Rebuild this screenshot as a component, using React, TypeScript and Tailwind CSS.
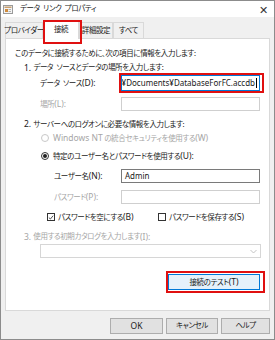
import type { ReactNode } from "react";

const FONT = "font-['Noto_Sans','Noto_Sans_CJK_JP',sans-serif] [font-feature-settings:'palt'] tracking-[-0.4px]";

// latin runs sit a little larger than the kana around them
function L({ children }: { children: ReactNode }) {
  return <span className="text-[8.5px] tracking-normal">{children}</span>;
}

function Radio({ checked, disabled }: { checked?: boolean; disabled?: boolean }) {
  return (
    <span
      className={`flex h-[8px] w-[8px] shrink-0 items-center justify-center rounded-full border ${
        disabled ? "border-[#c8c8c8] bg-white" : "border-[#333] bg-white"
      }`}
    >
      {checked && <span className="h-[4px] w-[4px] rounded-full bg-[#222]" />}
    </span>
  );
}

function Check({ checked }: { checked?: boolean }) {
  return (
    <span className="flex h-[8px] w-[8px] shrink-0 items-center justify-center border border-[#333] bg-white">
      {checked && (
        <svg width="7" height="7" viewBox="0 0 7 7">
          <path d="M1 3.6 L2.8 5.3 L6 1.4" fill="none" stroke="#222" strokeWidth="0.9" />
        </svg>
      )}
    </span>
  );
}

function Field({ label, disabled, indent, children }: { label: ReactNode; disabled?: boolean; indent: string; children?: ReactNode }) {
  return (
    <div className="flex h-[14px] items-center">
      <span className={`${indent} ${disabled ? "text-[#a6a6a6]" : "text-[#1a1a1a]"}`}>{label}</span>
      <div
        className={`ml-auto mr-[9px] flex h-full w-[139px] items-center border px-[3px] ${
          disabled ? "border-[#cfcfcf]" : "border-[#7a7a7a]"
        } bg-white`}
      >
        {children}
      </div>
    </div>
  );
}

function Tab({ label, w, active }: { label: string; w: string; active?: boolean }) {
  return active ? (
    <div className={`relative -mb-px flex h-[19px] ${w} items-center justify-center border border-b-0 border-[#d9d9d9] bg-white`}>
      {label}
      <span className="absolute -top-[1px] -left-[1px] -right-[4px] -bottom-[5px] border-2 border-[#e01010]" />
    </div>
  ) : (
    <div className={`mt-[2px] flex h-[16px] ${w} items-center justify-center border border-b-0 border-[#d9d9d9] bg-[#f0f0f0]`}>
      {label}
    </div>
  );
}

export default function App() {
  return (
    <div className={`${FONT} h-[340px] w-[275px] overflow-hidden whitespace-nowrap border border-[#8c8c8c] bg-[#f0f0f0] text-[7.5px] leading-none text-[#1a1a1a]`}>
      {/* title bar */}
      <div className="flex h-[16px] items-center bg-white">
        <svg className="ml-[2px]" width="11" height="11" viewBox="0 0 11 11">
          <rect x="0.5" y="1.5" width="9" height="8" fill="#f4f4f4" stroke="#9a9a9a" />
          <rect x="1.5" y="2.5" width="7" height="1.5" fill="#c8a070" />
          <rect x="2" y="5" width="3" height="3" fill="#d08a3a" />
          <rect x="5.5" y="5" width="2.5" height="1" fill="#b0b0b0" />
          <rect x="5.5" y="7" width="2.5" height="1" fill="#b0b0b0" />
        </svg>
        <span className="ml-[6px] text-[#222]">データ&ensp;リンク&ensp;プロパティ</span>
        <span className="ml-auto mr-[6px] text-[11px] font-light text-[#333]">✕</span>
      </div>

      {/* tabs */}
      <div className="mt-[2px] flex h-[19px] items-end pl-[4px]">
        <Tab label="プロバイダー" w="w-[38px]" />
        <Tab label="接続" w="w-[36px]" active />
        <Tab label="詳細設定" w="w-[34px]" />
        <Tab label="すべて" w="w-[31px]" />
      </div>

      {/* panel */}
      <div className="ml-[4px] flex h-[273px] w-[265px] flex-col border border-[#d9d9d9] bg-white">
        <div className="mt-[8px] flex h-[14px] items-center pl-[9px]">このデータに接続するために、次の項目に情報を入力します:</div>
        <div className="flex h-[14px] items-center pl-[18px]">
          <L>1.&nbsp;</L>データ&ensp;ソースとデータの場所を入力します:
        </div>

        <div className="flex h-[16px] items-center">
          <span className="ml-[34px]">
            データ&ensp;ソース<L>(D):</L>
          </span>
          <div className="relative ml-auto mr-[9px] h-full w-[139px]">
            <div className="flex h-full items-center justify-end overflow-hidden border border-[#0078d7] bg-white pr-[2px] text-[8px] tracking-normal">
              <span className="shrink-0">¥Documents¥DatabaseForFC.accdb</span>
              <span className="ml-px h-[10px] w-px shrink-0 bg-black" />
            </div>
            <span className="absolute -top-[2px] -left-[2px] -right-[4px] -bottom-[2px] border-2 border-[#e01010]" />
          </div>
        </div>

        <div className="mt-[6px]">
          <Field label={<>場所<L>(L):</L></>} disabled indent="ml-[34px]" />
        </div>

        <div className="mt-[7px] flex h-[13px] items-center pl-[18px]">
          <L>2.&nbsp;</L>サーバーへのログオンに必要な情報を入力します:
        </div>
        <div className="flex h-[14px] items-center gap-[4px] pl-[35px] text-[#a6a6a6]">
          <Radio disabled />
          <span>
            <L>Windows NT</L> の統合セキュリティを使用する<L>(W)</L>
          </span>
        </div>
        <div className="mt-[4px] flex h-[14px] items-center gap-[4px] pl-[35px]">
          <Radio checked />
          <span>
            特定のユーザー名とパスワードを使用する<L>(U):</L>
          </span>
        </div>

        <div className="mt-[6px]">
          <Field label={<>ユーザー名<L>(N):</L></>} indent="ml-[48px]">
            <span className="text-[8px] tracking-normal">Admin</span>
          </Field>
        </div>
        <div className="mt-[7px]">
          <Field label={<>パスワード<L>(P):</L></>} disabled indent="ml-[48px]" />
        </div>

        <div className="mt-[6px] flex h-[14px] items-center">
          <div className="ml-[41px] flex w-[111px] items-center gap-[3px]">
            <Check checked />
            <span>
              パスワードを空にする<L>(B)</L>
            </span>
          </div>
          <div className="flex items-center gap-[3px]">
            <Check />
            <span>
              パスワードを保存する<L>(S)</L>
            </span>
          </div>
        </div>

        <div className="mt-[6px] flex h-[14px] items-center pl-[18px] text-[#a6a6a6]">
          <L>3.&nbsp;</L>使用する初期カタログを入力します<L>(I):</L>
        </div>
        <div className="ml-[34px] flex h-[14px] w-[221px] items-center justify-end border border-[#d6d6d6] bg-white pr-[3px]">
          <svg width="7" height="5" viewBox="0 0 7 5">
            <path d="M0.5 1 L3.5 4 L6.5 1" fill="none" stroke="#bdbdbd" strokeWidth="0.9" />
          </svg>
        </div>

        <div className="relative ml-[162px] mt-[16px] flex h-[16px] w-[92px] items-center justify-center border border-[#0078d7] bg-[#e5f1fb]">
          <span>
            接続のテスト<L>(T)</L>
          </span>
          <span className="absolute -top-[4px] -left-[3px] -right-[6px] -bottom-[4px] border-2 border-[#e01010]" />
        </div>
      </div>

      {/* dialog buttons */}
      <div className="mt-[7px] flex justify-end gap-[3px] pr-[4px]">
        <div className="flex h-[16px] w-[53px] items-center justify-center border border-[#adadad] bg-[#e1e1e1]">
          <L>OK</L>
        </div>
        <div className="flex h-[16px] w-[52px] items-center justify-center border border-[#adadad] bg-[#e1e1e1]">キャンセル</div>
        <div className="flex h-[16px] w-[49px] items-center justify-center border border-[#adadad] bg-[#e1e1e1]">ヘルプ</div>
      </div>
    </div>
  );
}
